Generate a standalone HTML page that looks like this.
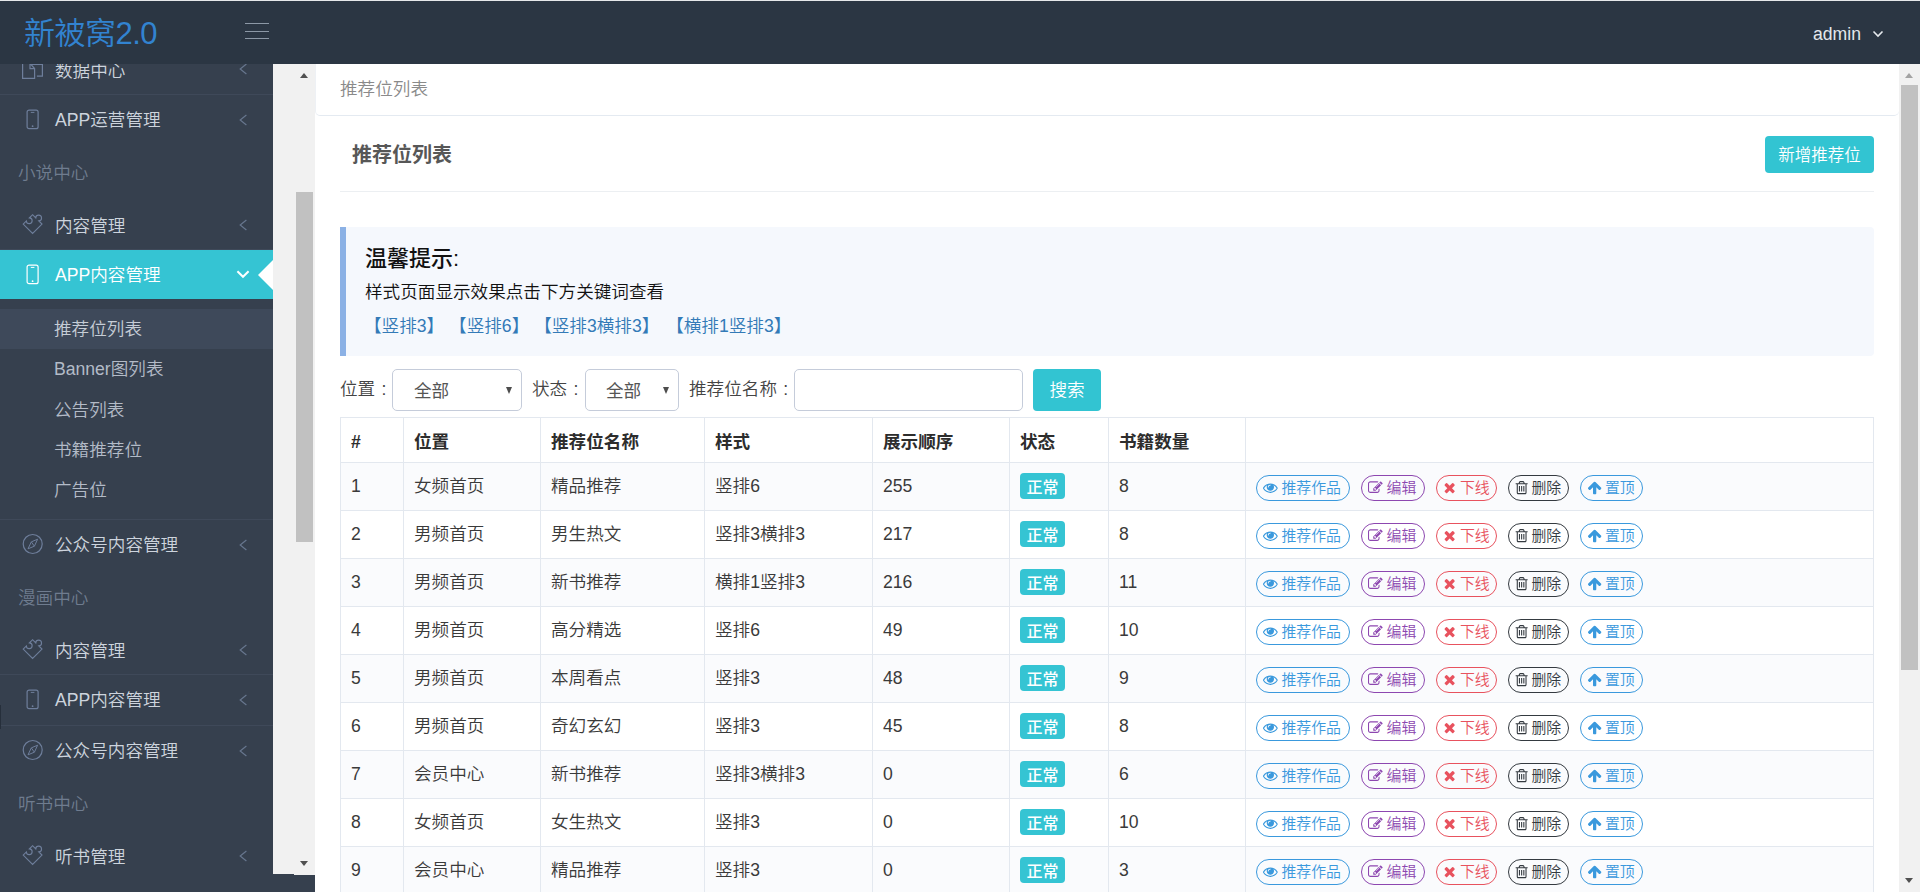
<!DOCTYPE html>
<html lang="zh-CN">
<head>
<meta charset="utf-8">
<title>推荐位列表</title>
<style>
*{box-sizing:border-box;margin:0;padding:0}
html,body{width:1920px;height:892px;overflow:hidden;background:#fff}
body{font-family:"Liberation Sans","Noto Sans CJK SC",sans-serif;font-size:17.6px;font-weight:350;color:#333;position:relative}
a{text-decoration:none;color:inherit}
ul{list-style:none}

/* top bar */
#top{position:absolute;left:0;top:0;width:1920px;height:64px;background:#2b3643;border-top:1px solid #e6e8ea;z-index:10}
#logo{position:absolute;left:24px;top:12px;font-size:31px;line-height:42px;font-weight:350;letter-spacing:-0.5px;color:#3283d0;white-space:nowrap}
#burger{position:absolute;left:245px;top:22px;width:24px;height:17px}
#burger i{position:absolute;left:0;width:24px;height:1px;background:#8c98a6}
#user{position:absolute;left:1813px;top:20px;font-size:17.6px;line-height:26px;color:#e3e7ec;white-space:nowrap}
#user svg{position:absolute;left:58.5px;top:9px}

/* sidebar */
#side{position:absolute;left:0;top:64px;width:315px;height:828px;background:#36404e;overflow:hidden}
#menu{position:absolute;left:0;top:-20px;width:273px}
#menu li.it{height:51px;border-bottom:1px solid #3f4959;position:relative}
#menu li.it.last{height:50px;border-bottom:0}
#menu li.it .tx{position:absolute;left:55px;top:0;line-height:51px;color:#cdd4dd;white-space:nowrap}
#menu li.it svg.ic{position:absolute}
#menu li.it svg.ch{position:absolute;left:239px;top:19px}
#menu li.it svg.chd{position:absolute;left:236px;top:20px}
#menu li.lb{height:54px;line-height:56px;padding-left:18px;color:#6f7c8f;white-space:nowrap}
#menu li.it.act{background:#35c4d3;border-bottom:0;height:49px}
#menu li.it.al .tx{top:1.7px}#menu li.it.al svg.ic{margin-top:0.7px}#menu li.it.al svg.ch{margin-top:1px}
#menu li.it.first .tx{top:2px}
#menu li.it.act .tx{color:#fff;line-height:50px}
#menu li.it.act:after{content:"";position:absolute;right:0;top:9.7px;border:15.5px solid transparent;border-right-color:#fff;border-left-width:0}
#sub{padding:9.7px 0 10px 0;border-bottom:1px solid #3f4959;height:221px}
#sub li{height:40.25px;line-height:40px;padding-left:54px;color:#b3bbc7;white-space:nowrap}
#sub li:nth-child(3),#sub li:nth-child(4){position:relative;top:1px}
#sub li.on{background:#3e495a;color:#c6cdd6}
.track{position:absolute;background:#f1f1f1;z-index:5}
.track .th{position:absolute;background:#c1c1c1}
.arr{position:absolute;width:0;height:0;border-style:solid;border-color:transparent}
.arr.up{border-width:0 4.75px 5px 4.75px;border-bottom-color:#505050}
.arr.dn{border-width:5px 4.75px 0 4.75px;border-top-color:#505050}

/* main */
#main{position:absolute;left:315px;top:64px;width:1584px;height:828px;background:#fff;overflow:hidden}
#crumb{position:absolute;left:0;top:0;width:1584px;height:52px;border-bottom:1px solid #e4eaf1;border-left:1px solid #eef1f5;border-radius:0 0 5px 5px;line-height:50px;padding-left:24px;color:#8a8a8a}
#title{position:absolute;left:37px;top:77px;font-size:20px;line-height:28px;font-weight:bold;color:#575757}
#add{position:absolute;left:1450px;top:72px;width:109px;height:37px;background:#32c4d2;color:#fff;border-radius:4px;text-align:center;line-height:39px;font-size:16.5px}
#hr{position:absolute;left:25px;top:127px;width:1534px;height:1px;background:#eceff2}
#alert{position:absolute;left:25px;top:163px;width:1534px;height:129px;background:#f5f8fd;border-left:6px solid #8bb1e5;border-radius:0 4px 4px 0;padding:16px 0 0 19px;color:#111}
#alert h4{font-size:22px;line-height:32px;font-weight:500;color:#111}
#alert p{line-height:34px}
#alert p.lk{color:#337ab7;line-height:34px;margin-left:-1px}
#flt{position:absolute;left:25px;top:305px;height:42px;white-space:nowrap;line-height:40px;color:#444}
#flt span,#flt div{position:absolute;top:0}
#flt span{word-spacing:1.5px}
.sel,.inp{height:42px;border:1px solid #c5ccda;border-radius:5px;background:#fff}
.sel b{position:absolute;left:21px;top:0;font-weight:normal;color:#555;line-height:42px}
.sel .arr{border-width:7px 3.5px 0 3.5px;border-top-color:#4d4d4d;right:9px;top:17px;left:auto}
#sbtn{height:42px;width:68px;background:#32c4d2;color:#fff;border-radius:4px;text-align:center;line-height:42px}

/* table */
#tb{position:absolute;left:25px;top:353px;width:1533px;border-collapse:separate;border-spacing:0;table-layout:fixed;border-right:1px solid #e3e8ef;border-bottom:1px solid #e3e8ef}
#tb th,#tb td{border-left:1px solid #e3e8ef;border-top:1px solid #e3e8ef;padding:0 0 0 10px;text-align:left;vertical-align:middle;white-space:nowrap;overflow:hidden}
#tb th{height:45px;font-weight:bold;color:#2d2d2d;line-height:26px;padding-top:4px}
#tb td{height:48px;color:#3a3a3a;line-height:26px;padding-bottom:1px}
#tb td i{font-style:normal}
#tb tbody tr:nth-child(odd) td{background:#fafbfd}
#tb td.bg{padding-bottom:2px}
#tb td.ops{padding-bottom:0;padding-top:2px}
.bdg{display:inline-block;width:45px;height:26px;line-height:23px;padding-top:3px;border-radius:4px;background:#35c4d3;color:#fff;font-weight:500;font-size:16px;text-align:center;vertical-align:middle}
td.ops{font-size:0}
.ob{display:inline-flex;align-items:center;justify-content:flex-start;height:26px;border:1px solid;border-radius:13px;margin-right:11px;font-size:14.9px;vertical-align:middle;white-space:nowrap;overflow:hidden}
.ob span{line-height:24px}
.fi{display:inline-block;fill:currentColor;width:15.3px;height:15.3px;flex:none;margin-left:-0.5px}
.b1{width:94px;color:#3a99dd;padding-left:6.6px}.b2{width:64px;color:#8d47b0;padding-left:6.6px}.b3{width:61px;color:#e8525e;padding-left:5.4px}.b4{width:61px;color:#343a40;padding-left:5.6px}.b5{width:63px;color:#3a99dd;padding-left:6px}
.i-eye{margin-right:3.3px;width:14.7px;margin-left:-0.2px}
.i-edit{margin-right:3.5px;width:14.7px;margin-left:-0.2px}
.i-x{margin-right:2.7px}
.i-tr{margin-right:2px}
.i-up{margin-right:3.1px}
</style>
</head>
<body>
<div id="top">
  <div id="logo">新被窝2.0</div>
  <div id="burger"><i style="top:0"></i><i style="top:8px"></i><i style="top:15px"></i></div>
  <div id="user">admin<svg width="12" height="8" viewBox="0 0 12 8"><path d="M1.5 1.5 L6 6 L10.5 1.5" fill="none" stroke="#e6eaee" stroke-width="1.6"/></svg></div>
</div>
<div id="side">
  <ul id="menu">
    <li class="it first"><svg class="ic" width="24" height="26" viewBox="0 0 24 26" style="left:21px;top:9px"><path d="M1.6 10.4H9L13.6 15.6V25.3H1.6Z M9 10.4V15.6H13.6" fill="none" stroke="#6e7e9b" stroke-width="1.2"/><path d="M9.6 11.4H21.4V23.2H15.9" fill="none" stroke="#6e7e9b" stroke-width="1.2"/></svg><span class="tx">数据中心</span><svg class="ch" width="9" height="12" viewBox="0 0 9 12"><path d="M7.4 1 L1.2 6 L7.4 11" fill="none" stroke="#67768e" stroke-width="1.2"/></svg></li>
    <li class="it last"><svg class="ic" width="14" height="22" viewBox="0 0 14 22" style="left:26px;top:14px"><rect x="1.1" y="1.1" width="11" height="18.6" rx="2" fill="none" stroke="#6e7e9b" stroke-width="1.2"/><path d="M4.8 3.4h3.6" stroke="#6e7e9b" stroke-width="1" fill="none"/><circle cx="6.6" cy="17.2" r="0.9" fill="#6e7e9b"/></svg><span class="tx">APP运营管理</span><svg class="ch" width="9" height="12" viewBox="0 0 9 12"><path d="M7.4 1 L1.2 6 L7.4 11" fill="none" stroke="#67768e" stroke-width="1.2"/></svg></li>
    <li class="lb">小说中心</li>
    <li class="it al"><svg class="ic" width="24" height="24" viewBox="0 0 24 24" style="left:21px;top:12px"><g transform="translate(11.6,12.1) rotate(-45) scale(0.95) translate(-7,-7)"><path d="M0 0H4.7a3.05 3.05 0 1 0 4.6 0H14V4.7a3.05 3.05 0 1 1 0 4.6V14H0Z" fill="none" stroke="#6e7e9b" stroke-width="1.2" stroke-linejoin="miter"/></g></svg><span class="tx">内容管理</span><svg class="ch" width="9" height="12" viewBox="0 0 9 12"><path d="M7.4 1 L1.2 6 L7.4 11" fill="none" stroke="#67768e" stroke-width="1.2"/></svg></li>
    <li class="it act"><svg class="ic" width="14" height="22" viewBox="0 0 14 22" style="left:26px;top:14px"><rect x="1.1" y="1.1" width="11" height="18.6" rx="2" fill="none" stroke="#fff" stroke-width="1.2"/><path d="M4.8 3.4h3.6" stroke="#fff" stroke-width="1" fill="none"/><circle cx="6.6" cy="17.2" r="0.9" fill="#fff"/></svg><span class="tx">APP内容管理</span><svg class="chd" width="14" height="9" viewBox="0 0 14 9"><path d="M1.4 1.2 L7 6.8 L12.6 1.2" fill="none" stroke="#fff" stroke-width="2"/></svg></li>
    <li><ul id="sub"><li class="on">推荐位列表</li><li>Banner图列表</li><li>公告列表</li><li>书籍推荐位</li><li>广告位</li></ul></li>
    <li class="it last"><svg class="ic" width="24" height="24" viewBox="0 0 24 24" style="left:21px;top:12.2px"><circle cx="11.7" cy="12" r="9.5" fill="none" stroke="#6e7e9b" stroke-width="1.2"/><path d="M16.6 7.2 L10.3 9.9 L7 16.8 L13.4 14.2 Z M10.3 9.9 L13.4 14.2" fill="none" stroke="#6e7e9b" stroke-width="1" stroke-linejoin="round"/></svg><span class="tx">公众号内容管理</span><svg class="ch" width="9" height="12" viewBox="0 0 9 12"><path d="M7.4 1 L1.2 6 L7.4 11" fill="none" stroke="#67768e" stroke-width="1.2"/></svg></li>
    <li class="lb">漫画中心</li>
    <li class="it al"><svg class="ic" width="24" height="24" viewBox="0 0 24 24" style="left:21px;top:12px"><g transform="translate(11.6,12.1) rotate(-45) scale(0.95) translate(-7,-7)"><path d="M0 0H4.7a3.05 3.05 0 1 0 4.6 0H14V4.7a3.05 3.05 0 1 1 0 4.6V14H0Z" fill="none" stroke="#6e7e9b" stroke-width="1.2" stroke-linejoin="miter"/></g></svg><span class="tx">内容管理</span><svg class="ch" width="9" height="12" viewBox="0 0 9 12"><path d="M7.4 1 L1.2 6 L7.4 11" fill="none" stroke="#67768e" stroke-width="1.2"/></svg></li>
    <li class="it"><svg class="ic" width="14" height="22" viewBox="0 0 14 22" style="left:26px;top:14px"><rect x="1.1" y="1.1" width="11" height="18.6" rx="2" fill="none" stroke="#6e7e9b" stroke-width="1.2"/><path d="M4.8 3.4h3.6" stroke="#6e7e9b" stroke-width="1" fill="none"/><circle cx="6.6" cy="17.2" r="0.9" fill="#6e7e9b"/></svg><span class="tx">APP内容管理</span><svg class="ch" width="9" height="12" viewBox="0 0 9 12"><path d="M7.4 1 L1.2 6 L7.4 11" fill="none" stroke="#67768e" stroke-width="1.2"/></svg></li>
    <li class="it last"><svg class="ic" width="24" height="24" viewBox="0 0 24 24" style="left:21px;top:12.2px"><circle cx="11.7" cy="12" r="9.5" fill="none" stroke="#6e7e9b" stroke-width="1.2"/><path d="M16.6 7.2 L10.3 9.9 L7 16.8 L13.4 14.2 Z M10.3 9.9 L13.4 14.2" fill="none" stroke="#6e7e9b" stroke-width="1" stroke-linejoin="round"/></svg><span class="tx">公众号内容管理</span><svg class="ch" width="9" height="12" viewBox="0 0 9 12"><path d="M7.4 1 L1.2 6 L7.4 11" fill="none" stroke="#67768e" stroke-width="1.2"/></svg></li>
    <li class="lb">听书中心</li>
    <li class="it al last"><svg class="ic" width="24" height="24" viewBox="0 0 24 24" style="left:21px;top:12px"><g transform="translate(11.6,12.1) rotate(-45) scale(0.95) translate(-7,-7)"><path d="M0 0H4.7a3.05 3.05 0 1 0 4.6 0H14V4.7a3.05 3.05 0 1 1 0 4.6V14H0Z" fill="none" stroke="#6e7e9b" stroke-width="1.2" stroke-linejoin="miter"/></g></svg><span class="tx">听书管理</span><svg class="ch" width="9" height="12" viewBox="0 0 9 12"><path d="M7.4 1 L1.2 6 L7.4 11" fill="none" stroke="#67768e" stroke-width="1.2"/></svg></li>
  </ul>
</div>
<div style="position:absolute;left:0;top:705px;width:1px;height:24px;background:#262f3b;z-index:6"></div>
<div style="position:absolute;left:294px;top:874px;width:21px;height:1px;background:#f1f1f1;z-index:6"></div>
<div class="track" style="left:273px;top:64px;width:42px;height:810px"><i class="arr up" style="left:27px;top:9px"></i><div class="th" style="left:23px;top:128px;width:17px;height:350px"></div><i class="arr dn" style="left:27px;top:797px"></i></div>
<div id="main">
  <div id="crumb">推荐位列表</div>
  <div id="title">推荐位列表</div>
  <div id="add">新增推荐位</div>
  <div id="hr"></div>
  <div id="alert">
    <h4>温馨提示:</h4>
    <p>样式页面显示效果点击下方关键词查看</p>
    <p class="lk"><a>【竖排3】</a> <a>【竖排6】</a> <a>【竖排3横排3】</a> <a style="margin-left:2px">【横排1竖排3】</a></p>
  </div>
  <div id="flt">
    <span style="left:0">位置 :</span>
    <div class="sel" style="left:52px;width:130px"><b>全部</b><i class="arr"></i></div>
    <span style="left:192px">状态 :</span>
    <div class="sel" style="left:245px;width:94px"><b style="left:20px">全部</b><i class="arr"></i></div>
    <span style="left:349px">推荐位名称 :</span>
    <div class="inp" style="left:454px;width:229px"></div>
    <div id="sbtn" style="left:693px">搜索</div>
  </div>
  <table id="tb">
    <colgroup><col style="width:63px"><col style="width:137px"><col style="width:164px"><col style="width:168px"><col style="width:137px"><col style="width:99px"><col style="width:137px"><col style="width:628px"></colgroup>
    <thead><tr><th>#</th><th>位置</th><th>推荐位名称</th><th>样式</th><th>展示顺序</th><th>状态</th><th>书籍数量</th><th></th></tr></thead>
    <tbody>
      <tr><td>1</td><td class="c">女频首页</td><td class="c">精品推荐</td><td class="c">竖排6</td><td>255</td><td class="bg"><span class="bdg">正常</span></td><td>8</td><td class="ops"><a class="ob b1"><svg class="fi i-eye" viewBox="0 0 1792 1792"><path d="M1664 960q-152-236-381-353 61 104 61 225 0 185-131.500 316.500t-316.500 131.500-316.500-131.500-131.500-316.500q0-121 61-225-229 117-381 353 133 205 333.500 326.500t434.500 121.500 434.500-121.500 333.500-326.500zm-720-384q0-20-14-34t-34-14q-125 0-214.500 89.500t-89.500 214.500q0 20 14 34t34 14 34-14 14-34q0-86 61-147t147-61q20 0 34-14t14-34zm848 384q0 34-20 69-140 230-376.500 368.500t-499.500 138.500-499.500-139-376.500-368q-20-35-20-69t20-69q140-229 376.500-368t499.500-139 499.500 139 376.500 368q20 35 20 69z"/></svg><span>推荐作品</span></a><a class="ob b2"><svg class="fi i-edit" viewBox="0 0 1792 1792"><path d="M888 1184l116-116-152-152-116 116v56h96v96h56zm440-720q-16-16-33 1l-350 350q-17 17-1 33t33-1l350-350q17-17 1-33zm80 594v190q0 119-84.500 203.500t-203.500 84.500h-832q-119 0-203.500-84.500t-84.500-203.500v-832q0-119 84.500-203.500t203.500-84.500h832q63 0 117 25 15 7 18 23 3 17-9 29l-49 49q-14 14-32 8-23-6-45-6h-832q-66 0-113 47t-47 113v832q0 66 47 113t113 47h832q66 0 113-47t47-113v-126q0-13 9-22l64-64q15-15 35-7t20 29zm-96-738l288 288-672 672h-288v-288zm444 132l-92 92-288-288 92-92q28-28 68-28t68 28l152 152q28 28 28 68t-28 68z"/></svg><span>编辑</span></a><a class="ob b3"><svg class="fi i-x" viewBox="0 0 1792 1792"><path d="M1490 1322q0 40-28 68l-136 136q-28 28-68 28t-68-28l-294-294-294 294q-28 28-68 28t-68-28l-136-136q-28-28-28-68t28-68l294-294-294-294q-28-28-28-68t28-68l136-136q28-28 68-28t68 28l294 294 294-294q28-28 68-28t68 28l136 136q28 28 28 68t-28 68l-294 294 294 294q28 28 28 68z"/></svg><span>下线</span></a><a class="ob b4"><svg class="fi i-tr" viewBox="0 0 1792 1792"><path d="M704 736v576q0 14-9 23t-23 9h-64q-14 0-23-9t-9-23v-576q0-14 9-23t23-9h64q14 0 23 9t9 23zm256 0v576q0 14-9 23t-23 9h-64q-14 0-23-9t-9-23v-576q0-14 9-23t23-9h64q14 0 23 9t9 23zm256 0v576q0 14-9 23t-23 9h-64q-14 0-23-9t-9-23v-576q0-14 9-23t23-9h64q14 0 23 9t9 23zm128 724v-948h-896v948q0 22 7 40.500t14.500 27 10.500 8.500h832q3 0 10.500-8.500t14.500-27 7-40.500zm-672-1076h448l-48-117q-7-9-17-11h-317q-10 2-17 11zm928 32v64q0 14-9 23t-23 9h-96v948q0 83-47 143.500t-113 60.500h-832q-66 0-113-58.500t-47-141.500v-952h-96q-14 0-23-9t-9-23v-64q0-14 9-23t23-9h309l70-167q15-37 54-63t79-26h320q40 0 79 26t54 63l70 167h309q14 0 23 9t9 23z"/></svg><span>删除</span></a><a class="ob b5"><svg class="fi i-up" viewBox="0 0 1792 1792"><path d="M1675 971q0 51-37 90l-75 75q-38 38-91 38-54 0-90-38l-294-293v704q0 52-37.500 84.500t-90.500 32.500h-128q-53 0-90.500-32.500t-37.500-84.500v-704l-294 293q-36 38-90 38t-90-38l-75-75q-38-38-38-90 0-53 38-91l651-651q35-37 90-37 54 0 91 37l651 651q37 39 37 91z"/></svg><span>置顶</span></a></td></tr>
      <tr><td>2</td><td class="c">男频首页</td><td class="c">男生热文</td><td class="c">竖排3横排3</td><td>217</td><td class="bg"><span class="bdg">正常</span></td><td>8</td><td class="ops"><a class="ob b1"><svg class="fi i-eye" viewBox="0 0 1792 1792"><path d="M1664 960q-152-236-381-353 61 104 61 225 0 185-131.500 316.500t-316.500 131.500-316.500-131.500-131.500-316.500q0-121 61-225-229 117-381 353 133 205 333.500 326.500t434.500 121.500 434.500-121.500 333.500-326.500zm-720-384q0-20-14-34t-34-14q-125 0-214.500 89.500t-89.500 214.500q0 20 14 34t34 14 34-14 14-34q0-86 61-147t147-61q20 0 34-14t14-34zm848 384q0 34-20 69-140 230-376.500 368.500t-499.500 138.500-499.500-139-376.500-368q-20-35-20-69t20-69q140-229 376.500-368t499.500-139 499.500 139 376.500 368q20 35 20 69z"/></svg><span>推荐作品</span></a><a class="ob b2"><svg class="fi i-edit" viewBox="0 0 1792 1792"><path d="M888 1184l116-116-152-152-116 116v56h96v96h56zm440-720q-16-16-33 1l-350 350q-17 17-1 33t33-1l350-350q17-17 1-33zm80 594v190q0 119-84.500 203.500t-203.500 84.500h-832q-119 0-203.500-84.500t-84.500-203.500v-832q0-119 84.500-203.500t203.500-84.500h832q63 0 117 25 15 7 18 23 3 17-9 29l-49 49q-14 14-32 8-23-6-45-6h-832q-66 0-113 47t-47 113v832q0 66 47 113t113 47h832q66 0 113-47t47-113v-126q0-13 9-22l64-64q15-15 35-7t20 29zm-96-738l288 288-672 672h-288v-288zm444 132l-92 92-288-288 92-92q28-28 68-28t68 28l152 152q28 28 28 68t-28 68z"/></svg><span>编辑</span></a><a class="ob b3"><svg class="fi i-x" viewBox="0 0 1792 1792"><path d="M1490 1322q0 40-28 68l-136 136q-28 28-68 28t-68-28l-294-294-294 294q-28 28-68 28t-68-28l-136-136q-28-28-28-68t28-68l294-294-294-294q-28-28-28-68t28-68l136-136q28-28 68-28t68 28l294 294 294-294q28-28 68-28t68 28l136 136q28 28 28 68t-28 68l-294 294 294 294q28 28 28 68z"/></svg><span>下线</span></a><a class="ob b4"><svg class="fi i-tr" viewBox="0 0 1792 1792"><path d="M704 736v576q0 14-9 23t-23 9h-64q-14 0-23-9t-9-23v-576q0-14 9-23t23-9h64q14 0 23 9t9 23zm256 0v576q0 14-9 23t-23 9h-64q-14 0-23-9t-9-23v-576q0-14 9-23t23-9h64q14 0 23 9t9 23zm256 0v576q0 14-9 23t-23 9h-64q-14 0-23-9t-9-23v-576q0-14 9-23t23-9h64q14 0 23 9t9 23zm128 724v-948h-896v948q0 22 7 40.500t14.500 27 10.500 8.500h832q3 0 10.500-8.500t14.500-27 7-40.500zm-672-1076h448l-48-117q-7-9-17-11h-317q-10 2-17 11zm928 32v64q0 14-9 23t-23 9h-96v948q0 83-47 143.500t-113 60.500h-832q-66 0-113-58.500t-47-141.500v-952h-96q-14 0-23-9t-9-23v-64q0-14 9-23t23-9h309l70-167q15-37 54-63t79-26h320q40 0 79 26t54 63l70 167h309q14 0 23 9t9 23z"/></svg><span>删除</span></a><a class="ob b5"><svg class="fi i-up" viewBox="0 0 1792 1792"><path d="M1675 971q0 51-37 90l-75 75q-38 38-91 38-54 0-90-38l-294-293v704q0 52-37.500 84.500t-90.500 32.500h-128q-53 0-90.500-32.500t-37.500-84.500v-704l-294 293q-36 38-90 38t-90-38l-75-75q-38-38-38-90 0-53 38-91l651-651q35-37 90-37 54 0 91 37l651 651q37 39 37 91z"/></svg><span>置顶</span></a></td></tr>
      <tr><td>3</td><td class="c">男频首页</td><td class="c">新书推荐</td><td class="c">横排1竖排3</td><td>216</td><td class="bg"><span class="bdg">正常</span></td><td>11</td><td class="ops"><a class="ob b1"><svg class="fi i-eye" viewBox="0 0 1792 1792"><path d="M1664 960q-152-236-381-353 61 104 61 225 0 185-131.500 316.500t-316.500 131.500-316.500-131.500-131.500-316.500q0-121 61-225-229 117-381 353 133 205 333.500 326.500t434.500 121.500 434.500-121.500 333.500-326.500zm-720-384q0-20-14-34t-34-14q-125 0-214.500 89.500t-89.500 214.500q0 20 14 34t34 14 34-14 14-34q0-86 61-147t147-61q20 0 34-14t14-34zm848 384q0 34-20 69-140 230-376.500 368.500t-499.500 138.500-499.500-139-376.500-368q-20-35-20-69t20-69q140-229 376.500-368t499.500-139 499.500 139 376.500 368q20 35 20 69z"/></svg><span>推荐作品</span></a><a class="ob b2"><svg class="fi i-edit" viewBox="0 0 1792 1792"><path d="M888 1184l116-116-152-152-116 116v56h96v96h56zm440-720q-16-16-33 1l-350 350q-17 17-1 33t33-1l350-350q17-17 1-33zm80 594v190q0 119-84.500 203.500t-203.500 84.500h-832q-119 0-203.500-84.500t-84.500-203.500v-832q0-119 84.500-203.500t203.500-84.500h832q63 0 117 25 15 7 18 23 3 17-9 29l-49 49q-14 14-32 8-23-6-45-6h-832q-66 0-113 47t-47 113v832q0 66 47 113t113 47h832q66 0 113-47t47-113v-126q0-13 9-22l64-64q15-15 35-7t20 29zm-96-738l288 288-672 672h-288v-288zm444 132l-92 92-288-288 92-92q28-28 68-28t68 28l152 152q28 28 28 68t-28 68z"/></svg><span>编辑</span></a><a class="ob b3"><svg class="fi i-x" viewBox="0 0 1792 1792"><path d="M1490 1322q0 40-28 68l-136 136q-28 28-68 28t-68-28l-294-294-294 294q-28 28-68 28t-68-28l-136-136q-28-28-28-68t28-68l294-294-294-294q-28-28-28-68t28-68l136-136q28-28 68-28t68 28l294 294 294-294q28-28 68-28t68 28l136 136q28 28 28 68t-28 68l-294 294 294 294q28 28 28 68z"/></svg><span>下线</span></a><a class="ob b4"><svg class="fi i-tr" viewBox="0 0 1792 1792"><path d="M704 736v576q0 14-9 23t-23 9h-64q-14 0-23-9t-9-23v-576q0-14 9-23t23-9h64q14 0 23 9t9 23zm256 0v576q0 14-9 23t-23 9h-64q-14 0-23-9t-9-23v-576q0-14 9-23t23-9h64q14 0 23 9t9 23zm256 0v576q0 14-9 23t-23 9h-64q-14 0-23-9t-9-23v-576q0-14 9-23t23-9h64q14 0 23 9t9 23zm128 724v-948h-896v948q0 22 7 40.500t14.500 27 10.500 8.500h832q3 0 10.500-8.500t14.500-27 7-40.500zm-672-1076h448l-48-117q-7-9-17-11h-317q-10 2-17 11zm928 32v64q0 14-9 23t-23 9h-96v948q0 83-47 143.500t-113 60.500h-832q-66 0-113-58.500t-47-141.500v-952h-96q-14 0-23-9t-9-23v-64q0-14 9-23t23-9h309l70-167q15-37 54-63t79-26h320q40 0 79 26t54 63l70 167h309q14 0 23 9t9 23z"/></svg><span>删除</span></a><a class="ob b5"><svg class="fi i-up" viewBox="0 0 1792 1792"><path d="M1675 971q0 51-37 90l-75 75q-38 38-91 38-54 0-90-38l-294-293v704q0 52-37.500 84.500t-90.500 32.500h-128q-53 0-90.500-32.500t-37.500-84.500v-704l-294 293q-36 38-90 38t-90-38l-75-75q-38-38-38-90 0-53 38-91l651-651q35-37 90-37 54 0 91 37l651 651q37 39 37 91z"/></svg><span>置顶</span></a></td></tr>
      <tr><td>4</td><td class="c">男频首页</td><td class="c">高分精选</td><td class="c">竖排6</td><td>49</td><td class="bg"><span class="bdg">正常</span></td><td>10</td><td class="ops"><a class="ob b1"><svg class="fi i-eye" viewBox="0 0 1792 1792"><path d="M1664 960q-152-236-381-353 61 104 61 225 0 185-131.500 316.500t-316.500 131.500-316.500-131.500-131.500-316.500q0-121 61-225-229 117-381 353 133 205 333.500 326.500t434.500 121.500 434.500-121.500 333.500-326.500zm-720-384q0-20-14-34t-34-14q-125 0-214.500 89.500t-89.500 214.500q0 20 14 34t34 14 34-14 14-34q0-86 61-147t147-61q20 0 34-14t14-34zm848 384q0 34-20 69-140 230-376.500 368.500t-499.500 138.500-499.500-139-376.500-368q-20-35-20-69t20-69q140-229 376.500-368t499.500-139 499.500 139 376.500 368q20 35 20 69z"/></svg><span>推荐作品</span></a><a class="ob b2"><svg class="fi i-edit" viewBox="0 0 1792 1792"><path d="M888 1184l116-116-152-152-116 116v56h96v96h56zm440-720q-16-16-33 1l-350 350q-17 17-1 33t33-1l350-350q17-17 1-33zm80 594v190q0 119-84.500 203.500t-203.500 84.500h-832q-119 0-203.500-84.500t-84.500-203.500v-832q0-119 84.500-203.500t203.500-84.500h832q63 0 117 25 15 7 18 23 3 17-9 29l-49 49q-14 14-32 8-23-6-45-6h-832q-66 0-113 47t-47 113v832q0 66 47 113t113 47h832q66 0 113-47t47-113v-126q0-13 9-22l64-64q15-15 35-7t20 29zm-96-738l288 288-672 672h-288v-288zm444 132l-92 92-288-288 92-92q28-28 68-28t68 28l152 152q28 28 28 68t-28 68z"/></svg><span>编辑</span></a><a class="ob b3"><svg class="fi i-x" viewBox="0 0 1792 1792"><path d="M1490 1322q0 40-28 68l-136 136q-28 28-68 28t-68-28l-294-294-294 294q-28 28-68 28t-68-28l-136-136q-28-28-28-68t28-68l294-294-294-294q-28-28-28-68t28-68l136-136q28-28 68-28t68 28l294 294 294-294q28-28 68-28t68 28l136 136q28 28 28 68t-28 68l-294 294 294 294q28 28 28 68z"/></svg><span>下线</span></a><a class="ob b4"><svg class="fi i-tr" viewBox="0 0 1792 1792"><path d="M704 736v576q0 14-9 23t-23 9h-64q-14 0-23-9t-9-23v-576q0-14 9-23t23-9h64q14 0 23 9t9 23zm256 0v576q0 14-9 23t-23 9h-64q-14 0-23-9t-9-23v-576q0-14 9-23t23-9h64q14 0 23 9t9 23zm256 0v576q0 14-9 23t-23 9h-64q-14 0-23-9t-9-23v-576q0-14 9-23t23-9h64q14 0 23 9t9 23zm128 724v-948h-896v948q0 22 7 40.500t14.500 27 10.500 8.500h832q3 0 10.500-8.500t14.500-27 7-40.500zm-672-1076h448l-48-117q-7-9-17-11h-317q-10 2-17 11zm928 32v64q0 14-9 23t-23 9h-96v948q0 83-47 143.500t-113 60.500h-832q-66 0-113-58.500t-47-141.500v-952h-96q-14 0-23-9t-9-23v-64q0-14 9-23t23-9h309l70-167q15-37 54-63t79-26h320q40 0 79 26t54 63l70 167h309q14 0 23 9t9 23z"/></svg><span>删除</span></a><a class="ob b5"><svg class="fi i-up" viewBox="0 0 1792 1792"><path d="M1675 971q0 51-37 90l-75 75q-38 38-91 38-54 0-90-38l-294-293v704q0 52-37.500 84.500t-90.500 32.500h-128q-53 0-90.500-32.500t-37.500-84.500v-704l-294 293q-36 38-90 38t-90-38l-75-75q-38-38-38-90 0-53 38-91l651-651q35-37 90-37 54 0 91 37l651 651q37 39 37 91z"/></svg><span>置顶</span></a></td></tr>
      <tr><td>5</td><td class="c">男频首页</td><td class="c">本周看点</td><td class="c">竖排3</td><td>48</td><td class="bg"><span class="bdg">正常</span></td><td>9</td><td class="ops"><a class="ob b1"><svg class="fi i-eye" viewBox="0 0 1792 1792"><path d="M1664 960q-152-236-381-353 61 104 61 225 0 185-131.500 316.500t-316.500 131.500-316.500-131.500-131.500-316.500q0-121 61-225-229 117-381 353 133 205 333.500 326.500t434.500 121.500 434.500-121.500 333.500-326.500zm-720-384q0-20-14-34t-34-14q-125 0-214.500 89.500t-89.500 214.500q0 20 14 34t34 14 34-14 14-34q0-86 61-147t147-61q20 0 34-14t14-34zm848 384q0 34-20 69-140 230-376.500 368.500t-499.500 138.500-499.500-139-376.500-368q-20-35-20-69t20-69q140-229 376.500-368t499.500-139 499.500 139 376.500 368q20 35 20 69z"/></svg><span>推荐作品</span></a><a class="ob b2"><svg class="fi i-edit" viewBox="0 0 1792 1792"><path d="M888 1184l116-116-152-152-116 116v56h96v96h56zm440-720q-16-16-33 1l-350 350q-17 17-1 33t33-1l350-350q17-17 1-33zm80 594v190q0 119-84.500 203.500t-203.500 84.500h-832q-119 0-203.500-84.500t-84.500-203.500v-832q0-119 84.500-203.500t203.500-84.500h832q63 0 117 25 15 7 18 23 3 17-9 29l-49 49q-14 14-32 8-23-6-45-6h-832q-66 0-113 47t-47 113v832q0 66 47 113t113 47h832q66 0 113-47t47-113v-126q0-13 9-22l64-64q15-15 35-7t20 29zm-96-738l288 288-672 672h-288v-288zm444 132l-92 92-288-288 92-92q28-28 68-28t68 28l152 152q28 28 28 68t-28 68z"/></svg><span>编辑</span></a><a class="ob b3"><svg class="fi i-x" viewBox="0 0 1792 1792"><path d="M1490 1322q0 40-28 68l-136 136q-28 28-68 28t-68-28l-294-294-294 294q-28 28-68 28t-68-28l-136-136q-28-28-28-68t28-68l294-294-294-294q-28-28-28-68t28-68l136-136q28-28 68-28t68 28l294 294 294-294q28-28 68-28t68 28l136 136q28 28 28 68t-28 68l-294 294 294 294q28 28 28 68z"/></svg><span>下线</span></a><a class="ob b4"><svg class="fi i-tr" viewBox="0 0 1792 1792"><path d="M704 736v576q0 14-9 23t-23 9h-64q-14 0-23-9t-9-23v-576q0-14 9-23t23-9h64q14 0 23 9t9 23zm256 0v576q0 14-9 23t-23 9h-64q-14 0-23-9t-9-23v-576q0-14 9-23t23-9h64q14 0 23 9t9 23zm256 0v576q0 14-9 23t-23 9h-64q-14 0-23-9t-9-23v-576q0-14 9-23t23-9h64q14 0 23 9t9 23zm128 724v-948h-896v948q0 22 7 40.500t14.500 27 10.500 8.500h832q3 0 10.500-8.500t14.500-27 7-40.500zm-672-1076h448l-48-117q-7-9-17-11h-317q-10 2-17 11zm928 32v64q0 14-9 23t-23 9h-96v948q0 83-47 143.500t-113 60.500h-832q-66 0-113-58.500t-47-141.500v-952h-96q-14 0-23-9t-9-23v-64q0-14 9-23t23-9h309l70-167q15-37 54-63t79-26h320q40 0 79 26t54 63l70 167h309q14 0 23 9t9 23z"/></svg><span>删除</span></a><a class="ob b5"><svg class="fi i-up" viewBox="0 0 1792 1792"><path d="M1675 971q0 51-37 90l-75 75q-38 38-91 38-54 0-90-38l-294-293v704q0 52-37.500 84.500t-90.500 32.500h-128q-53 0-90.500-32.500t-37.500-84.500v-704l-294 293q-36 38-90 38t-90-38l-75-75q-38-38-38-90 0-53 38-91l651-651q35-37 90-37 54 0 91 37l651 651q37 39 37 91z"/></svg><span>置顶</span></a></td></tr>
      <tr><td>6</td><td class="c">男频首页</td><td class="c">奇幻玄幻</td><td class="c">竖排3</td><td>45</td><td class="bg"><span class="bdg">正常</span></td><td>8</td><td class="ops"><a class="ob b1"><svg class="fi i-eye" viewBox="0 0 1792 1792"><path d="M1664 960q-152-236-381-353 61 104 61 225 0 185-131.500 316.500t-316.500 131.500-316.500-131.500-131.500-316.500q0-121 61-225-229 117-381 353 133 205 333.500 326.500t434.500 121.500 434.500-121.500 333.500-326.500zm-720-384q0-20-14-34t-34-14q-125 0-214.500 89.500t-89.500 214.500q0 20 14 34t34 14 34-14 14-34q0-86 61-147t147-61q20 0 34-14t14-34zm848 384q0 34-20 69-140 230-376.500 368.500t-499.500 138.500-499.500-139-376.500-368q-20-35-20-69t20-69q140-229 376.500-368t499.500-139 499.500 139 376.500 368q20 35 20 69z"/></svg><span>推荐作品</span></a><a class="ob b2"><svg class="fi i-edit" viewBox="0 0 1792 1792"><path d="M888 1184l116-116-152-152-116 116v56h96v96h56zm440-720q-16-16-33 1l-350 350q-17 17-1 33t33-1l350-350q17-17 1-33zm80 594v190q0 119-84.500 203.500t-203.500 84.500h-832q-119 0-203.500-84.500t-84.500-203.500v-832q0-119 84.500-203.500t203.500-84.500h832q63 0 117 25 15 7 18 23 3 17-9 29l-49 49q-14 14-32 8-23-6-45-6h-832q-66 0-113 47t-47 113v832q0 66 47 113t113 47h832q66 0 113-47t47-113v-126q0-13 9-22l64-64q15-15 35-7t20 29zm-96-738l288 288-672 672h-288v-288zm444 132l-92 92-288-288 92-92q28-28 68-28t68 28l152 152q28 28 28 68t-28 68z"/></svg><span>编辑</span></a><a class="ob b3"><svg class="fi i-x" viewBox="0 0 1792 1792"><path d="M1490 1322q0 40-28 68l-136 136q-28 28-68 28t-68-28l-294-294-294 294q-28 28-68 28t-68-28l-136-136q-28-28-28-68t28-68l294-294-294-294q-28-28-28-68t28-68l136-136q28-28 68-28t68 28l294 294 294-294q28-28 68-28t68 28l136 136q28 28 28 68t-28 68l-294 294 294 294q28 28 28 68z"/></svg><span>下线</span></a><a class="ob b4"><svg class="fi i-tr" viewBox="0 0 1792 1792"><path d="M704 736v576q0 14-9 23t-23 9h-64q-14 0-23-9t-9-23v-576q0-14 9-23t23-9h64q14 0 23 9t9 23zm256 0v576q0 14-9 23t-23 9h-64q-14 0-23-9t-9-23v-576q0-14 9-23t23-9h64q14 0 23 9t9 23zm256 0v576q0 14-9 23t-23 9h-64q-14 0-23-9t-9-23v-576q0-14 9-23t23-9h64q14 0 23 9t9 23zm128 724v-948h-896v948q0 22 7 40.500t14.500 27 10.500 8.500h832q3 0 10.500-8.500t14.500-27 7-40.500zm-672-1076h448l-48-117q-7-9-17-11h-317q-10 2-17 11zm928 32v64q0 14-9 23t-23 9h-96v948q0 83-47 143.500t-113 60.500h-832q-66 0-113-58.500t-47-141.500v-952h-96q-14 0-23-9t-9-23v-64q0-14 9-23t23-9h309l70-167q15-37 54-63t79-26h320q40 0 79 26t54 63l70 167h309q14 0 23 9t9 23z"/></svg><span>删除</span></a><a class="ob b5"><svg class="fi i-up" viewBox="0 0 1792 1792"><path d="M1675 971q0 51-37 90l-75 75q-38 38-91 38-54 0-90-38l-294-293v704q0 52-37.500 84.500t-90.500 32.500h-128q-53 0-90.500-32.500t-37.500-84.500v-704l-294 293q-36 38-90 38t-90-38l-75-75q-38-38-38-90 0-53 38-91l651-651q35-37 90-37 54 0 91 37l651 651q37 39 37 91z"/></svg><span>置顶</span></a></td></tr>
      <tr><td>7</td><td class="c">会员中心</td><td class="c">新书推荐</td><td class="c">竖排3横排3</td><td>0</td><td class="bg"><span class="bdg">正常</span></td><td>6</td><td class="ops"><a class="ob b1"><svg class="fi i-eye" viewBox="0 0 1792 1792"><path d="M1664 960q-152-236-381-353 61 104 61 225 0 185-131.500 316.500t-316.500 131.500-316.500-131.500-131.500-316.500q0-121 61-225-229 117-381 353 133 205 333.500 326.500t434.500 121.500 434.500-121.500 333.500-326.500zm-720-384q0-20-14-34t-34-14q-125 0-214.500 89.500t-89.500 214.500q0 20 14 34t34 14 34-14 14-34q0-86 61-147t147-61q20 0 34-14t14-34zm848 384q0 34-20 69-140 230-376.500 368.500t-499.500 138.500-499.500-139-376.500-368q-20-35-20-69t20-69q140-229 376.500-368t499.500-139 499.500 139 376.500 368q20 35 20 69z"/></svg><span>推荐作品</span></a><a class="ob b2"><svg class="fi i-edit" viewBox="0 0 1792 1792"><path d="M888 1184l116-116-152-152-116 116v56h96v96h56zm440-720q-16-16-33 1l-350 350q-17 17-1 33t33-1l350-350q17-17 1-33zm80 594v190q0 119-84.500 203.500t-203.500 84.500h-832q-119 0-203.500-84.500t-84.500-203.500v-832q0-119 84.500-203.500t203.500-84.500h832q63 0 117 25 15 7 18 23 3 17-9 29l-49 49q-14 14-32 8-23-6-45-6h-832q-66 0-113 47t-47 113v832q0 66 47 113t113 47h832q66 0 113-47t47-113v-126q0-13 9-22l64-64q15-15 35-7t20 29zm-96-738l288 288-672 672h-288v-288zm444 132l-92 92-288-288 92-92q28-28 68-28t68 28l152 152q28 28 28 68t-28 68z"/></svg><span>编辑</span></a><a class="ob b3"><svg class="fi i-x" viewBox="0 0 1792 1792"><path d="M1490 1322q0 40-28 68l-136 136q-28 28-68 28t-68-28l-294-294-294 294q-28 28-68 28t-68-28l-136-136q-28-28-28-68t28-68l294-294-294-294q-28-28-28-68t28-68l136-136q28-28 68-28t68 28l294 294 294-294q28-28 68-28t68 28l136 136q28 28 28 68t-28 68l-294 294 294 294q28 28 28 68z"/></svg><span>下线</span></a><a class="ob b4"><svg class="fi i-tr" viewBox="0 0 1792 1792"><path d="M704 736v576q0 14-9 23t-23 9h-64q-14 0-23-9t-9-23v-576q0-14 9-23t23-9h64q14 0 23 9t9 23zm256 0v576q0 14-9 23t-23 9h-64q-14 0-23-9t-9-23v-576q0-14 9-23t23-9h64q14 0 23 9t9 23zm256 0v576q0 14-9 23t-23 9h-64q-14 0-23-9t-9-23v-576q0-14 9-23t23-9h64q14 0 23 9t9 23zm128 724v-948h-896v948q0 22 7 40.500t14.500 27 10.500 8.500h832q3 0 10.500-8.500t14.500-27 7-40.500zm-672-1076h448l-48-117q-7-9-17-11h-317q-10 2-17 11zm928 32v64q0 14-9 23t-23 9h-96v948q0 83-47 143.500t-113 60.500h-832q-66 0-113-58.500t-47-141.500v-952h-96q-14 0-23-9t-9-23v-64q0-14 9-23t23-9h309l70-167q15-37 54-63t79-26h320q40 0 79 26t54 63l70 167h309q14 0 23 9t9 23z"/></svg><span>删除</span></a><a class="ob b5"><svg class="fi i-up" viewBox="0 0 1792 1792"><path d="M1675 971q0 51-37 90l-75 75q-38 38-91 38-54 0-90-38l-294-293v704q0 52-37.500 84.500t-90.500 32.500h-128q-53 0-90.500-32.500t-37.500-84.500v-704l-294 293q-36 38-90 38t-90-38l-75-75q-38-38-38-90 0-53 38-91l651-651q35-37 90-37 54 0 91 37l651 651q37 39 37 91z"/></svg><span>置顶</span></a></td></tr>
      <tr><td>8</td><td class="c">女频首页</td><td class="c">女生热文</td><td class="c">竖排3</td><td>0</td><td class="bg"><span class="bdg">正常</span></td><td>10</td><td class="ops"><a class="ob b1"><svg class="fi i-eye" viewBox="0 0 1792 1792"><path d="M1664 960q-152-236-381-353 61 104 61 225 0 185-131.500 316.500t-316.500 131.500-316.500-131.500-131.500-316.500q0-121 61-225-229 117-381 353 133 205 333.500 326.500t434.500 121.500 434.500-121.500 333.500-326.500zm-720-384q0-20-14-34t-34-14q-125 0-214.500 89.500t-89.500 214.500q0 20 14 34t34 14 34-14 14-34q0-86 61-147t147-61q20 0 34-14t14-34zm848 384q0 34-20 69-140 230-376.500 368.500t-499.500 138.500-499.500-139-376.500-368q-20-35-20-69t20-69q140-229 376.500-368t499.500-139 499.500 139 376.500 368q20 35 20 69z"/></svg><span>推荐作品</span></a><a class="ob b2"><svg class="fi i-edit" viewBox="0 0 1792 1792"><path d="M888 1184l116-116-152-152-116 116v56h96v96h56zm440-720q-16-16-33 1l-350 350q-17 17-1 33t33-1l350-350q17-17 1-33zm80 594v190q0 119-84.500 203.500t-203.500 84.500h-832q-119 0-203.500-84.500t-84.500-203.500v-832q0-119 84.500-203.500t203.500-84.500h832q63 0 117 25 15 7 18 23 3 17-9 29l-49 49q-14 14-32 8-23-6-45-6h-832q-66 0-113 47t-47 113v832q0 66 47 113t113 47h832q66 0 113-47t47-113v-126q0-13 9-22l64-64q15-15 35-7t20 29zm-96-738l288 288-672 672h-288v-288zm444 132l-92 92-288-288 92-92q28-28 68-28t68 28l152 152q28 28 28 68t-28 68z"/></svg><span>编辑</span></a><a class="ob b3"><svg class="fi i-x" viewBox="0 0 1792 1792"><path d="M1490 1322q0 40-28 68l-136 136q-28 28-68 28t-68-28l-294-294-294 294q-28 28-68 28t-68-28l-136-136q-28-28-28-68t28-68l294-294-294-294q-28-28-28-68t28-68l136-136q28-28 68-28t68 28l294 294 294-294q28-28 68-28t68 28l136 136q28 28 28 68t-28 68l-294 294 294 294q28 28 28 68z"/></svg><span>下线</span></a><a class="ob b4"><svg class="fi i-tr" viewBox="0 0 1792 1792"><path d="M704 736v576q0 14-9 23t-23 9h-64q-14 0-23-9t-9-23v-576q0-14 9-23t23-9h64q14 0 23 9t9 23zm256 0v576q0 14-9 23t-23 9h-64q-14 0-23-9t-9-23v-576q0-14 9-23t23-9h64q14 0 23 9t9 23zm256 0v576q0 14-9 23t-23 9h-64q-14 0-23-9t-9-23v-576q0-14 9-23t23-9h64q14 0 23 9t9 23zm128 724v-948h-896v948q0 22 7 40.500t14.500 27 10.500 8.500h832q3 0 10.500-8.500t14.500-27 7-40.500zm-672-1076h448l-48-117q-7-9-17-11h-317q-10 2-17 11zm928 32v64q0 14-9 23t-23 9h-96v948q0 83-47 143.500t-113 60.500h-832q-66 0-113-58.500t-47-141.500v-952h-96q-14 0-23-9t-9-23v-64q0-14 9-23t23-9h309l70-167q15-37 54-63t79-26h320q40 0 79 26t54 63l70 167h309q14 0 23 9t9 23z"/></svg><span>删除</span></a><a class="ob b5"><svg class="fi i-up" viewBox="0 0 1792 1792"><path d="M1675 971q0 51-37 90l-75 75q-38 38-91 38-54 0-90-38l-294-293v704q0 52-37.500 84.500t-90.500 32.500h-128q-53 0-90.500-32.500t-37.500-84.500v-704l-294 293q-36 38-90 38t-90-38l-75-75q-38-38-38-90 0-53 38-91l651-651q35-37 90-37 54 0 91 37l651 651q37 39 37 91z"/></svg><span>置顶</span></a></td></tr>
      <tr><td>9</td><td class="c">会员中心</td><td class="c">精品推荐</td><td class="c">竖排3</td><td>0</td><td class="bg"><span class="bdg">正常</span></td><td>3</td><td class="ops"><a class="ob b1"><svg class="fi i-eye" viewBox="0 0 1792 1792"><path d="M1664 960q-152-236-381-353 61 104 61 225 0 185-131.500 316.500t-316.500 131.500-316.500-131.500-131.500-316.500q0-121 61-225-229 117-381 353 133 205 333.500 326.500t434.500 121.500 434.500-121.500 333.500-326.500zm-720-384q0-20-14-34t-34-14q-125 0-214.500 89.500t-89.500 214.500q0 20 14 34t34 14 34-14 14-34q0-86 61-147t147-61q20 0 34-14t14-34zm848 384q0 34-20 69-140 230-376.500 368.500t-499.500 138.500-499.500-139-376.500-368q-20-35-20-69t20-69q140-229 376.500-368t499.500-139 499.500 139 376.500 368q20 35 20 69z"/></svg><span>推荐作品</span></a><a class="ob b2"><svg class="fi i-edit" viewBox="0 0 1792 1792"><path d="M888 1184l116-116-152-152-116 116v56h96v96h56zm440-720q-16-16-33 1l-350 350q-17 17-1 33t33-1l350-350q17-17 1-33zm80 594v190q0 119-84.500 203.500t-203.500 84.500h-832q-119 0-203.500-84.500t-84.500-203.500v-832q0-119 84.500-203.500t203.500-84.500h832q63 0 117 25 15 7 18 23 3 17-9 29l-49 49q-14 14-32 8-23-6-45-6h-832q-66 0-113 47t-47 113v832q0 66 47 113t113 47h832q66 0 113-47t47-113v-126q0-13 9-22l64-64q15-15 35-7t20 29zm-96-738l288 288-672 672h-288v-288zm444 132l-92 92-288-288 92-92q28-28 68-28t68 28l152 152q28 28 28 68t-28 68z"/></svg><span>编辑</span></a><a class="ob b3"><svg class="fi i-x" viewBox="0 0 1792 1792"><path d="M1490 1322q0 40-28 68l-136 136q-28 28-68 28t-68-28l-294-294-294 294q-28 28-68 28t-68-28l-136-136q-28-28-28-68t28-68l294-294-294-294q-28-28-28-68t28-68l136-136q28-28 68-28t68 28l294 294 294-294q28-28 68-28t68 28l136 136q28 28 28 68t-28 68l-294 294 294 294q28 28 28 68z"/></svg><span>下线</span></a><a class="ob b4"><svg class="fi i-tr" viewBox="0 0 1792 1792"><path d="M704 736v576q0 14-9 23t-23 9h-64q-14 0-23-9t-9-23v-576q0-14 9-23t23-9h64q14 0 23 9t9 23zm256 0v576q0 14-9 23t-23 9h-64q-14 0-23-9t-9-23v-576q0-14 9-23t23-9h64q14 0 23 9t9 23zm256 0v576q0 14-9 23t-23 9h-64q-14 0-23-9t-9-23v-576q0-14 9-23t23-9h64q14 0 23 9t9 23zm128 724v-948h-896v948q0 22 7 40.500t14.500 27 10.500 8.500h832q3 0 10.500-8.500t14.500-27 7-40.500zm-672-1076h448l-48-117q-7-9-17-11h-317q-10 2-17 11zm928 32v64q0 14-9 23t-23 9h-96v948q0 83-47 143.500t-113 60.500h-832q-66 0-113-58.500t-47-141.500v-952h-96q-14 0-23-9t-9-23v-64q0-14 9-23t23-9h309l70-167q15-37 54-63t79-26h320q40 0 79 26t54 63l70 167h309q14 0 23 9t9 23z"/></svg><span>删除</span></a><a class="ob b5"><svg class="fi i-up" viewBox="0 0 1792 1792"><path d="M1675 971q0 51-37 90l-75 75q-38 38-91 38-54 0-90-38l-294-293v704q0 52-37.500 84.500t-90.500 32.500h-128q-53 0-90.500-32.500t-37.500-84.500v-704l-294 293q-36 38-90 38t-90-38l-75-75q-38-38-38-90 0-53 38-91l651-651q35-37 90-37 54 0 91 37l651 651q37 39 37 91z"/></svg><span>置顶</span></a></td></tr>
    </tbody>
  </table>
</div>
<div class="track" style="left:1899px;top:64px;width:21px;height:828px"><i class="arr up" style="left:5.6px;top:9px;border-bottom-color:#a3a3a3"></i><div class="th" style="left:2px;top:21px;width:17px;height:585px"></div><i class="arr dn" style="left:5.6px;top:814px"></i></div>
</body>
</html>
